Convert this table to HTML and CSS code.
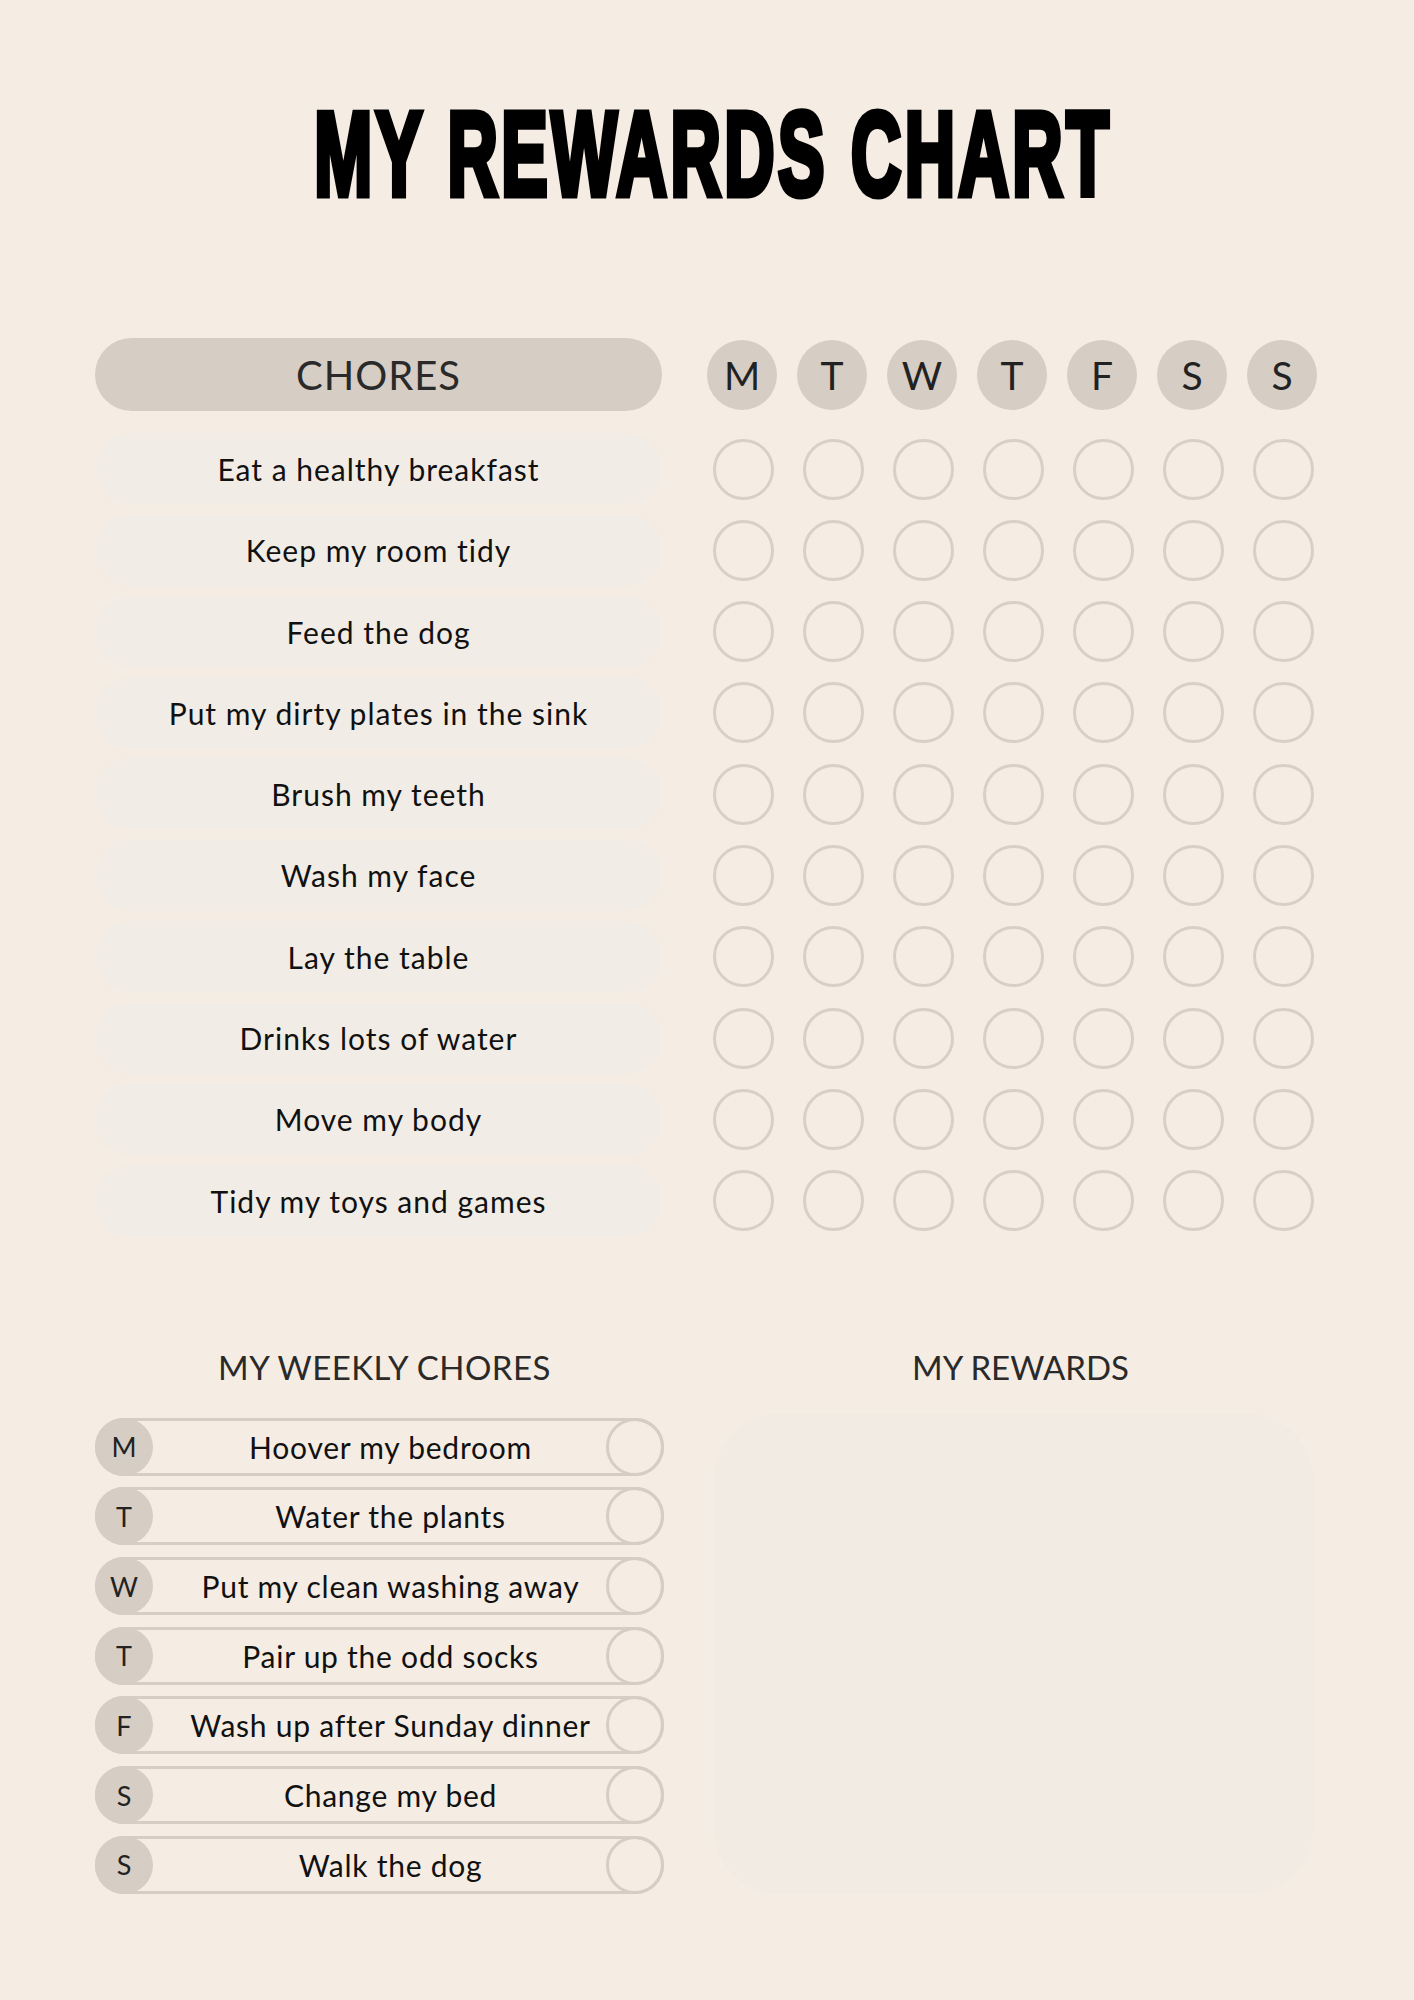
FILE: index.html
```
<!DOCTYPE html>
<html lang="en">
<head>
<meta charset="utf-8">
<title>My Rewards Chart</title>
<link rel="stylesheet" href="styles.css">
</head>
<body>
<div class="page">
  <h1 class="title"><span class="title-text">MY REWARDS CHART</span></h1>

  <section class="chart">
    <div class="chores-col">
      <div class="chores-head">CHORES</div>
      <ul class="chore-list">
        <li class="chore">Eat a healthy breakfast</li>
        <li class="chore">Keep my room tidy</li>
        <li class="chore">Feed the dog</li>
        <li class="chore">Put my dirty plates in the sink</li>
        <li class="chore">Brush my teeth</li>
        <li class="chore">Wash my face</li>
        <li class="chore">Lay the table</li>
        <li class="chore">Drinks lots of water</li>
        <li class="chore">Move my body</li>
        <li class="chore">Tidy my toys and games</li>
      </ul>
    </div>
    <div class="days-col">
      <div class="day-head">
        <span class="day">M</span><span class="day">T</span><span class="day">W</span><span class="day">T</span><span class="day">F</span><span class="day">S</span><span class="day">S</span>
      </div>
      <div class="tick-list">
        <div class="tick-row"><span class="tick"></span><span class="tick"></span><span class="tick"></span><span class="tick"></span><span class="tick"></span><span class="tick"></span><span class="tick"></span></div>
        <div class="tick-row"><span class="tick"></span><span class="tick"></span><span class="tick"></span><span class="tick"></span><span class="tick"></span><span class="tick"></span><span class="tick"></span></div>
        <div class="tick-row"><span class="tick"></span><span class="tick"></span><span class="tick"></span><span class="tick"></span><span class="tick"></span><span class="tick"></span><span class="tick"></span></div>
        <div class="tick-row"><span class="tick"></span><span class="tick"></span><span class="tick"></span><span class="tick"></span><span class="tick"></span><span class="tick"></span><span class="tick"></span></div>
        <div class="tick-row"><span class="tick"></span><span class="tick"></span><span class="tick"></span><span class="tick"></span><span class="tick"></span><span class="tick"></span><span class="tick"></span></div>
        <div class="tick-row"><span class="tick"></span><span class="tick"></span><span class="tick"></span><span class="tick"></span><span class="tick"></span><span class="tick"></span><span class="tick"></span></div>
        <div class="tick-row"><span class="tick"></span><span class="tick"></span><span class="tick"></span><span class="tick"></span><span class="tick"></span><span class="tick"></span><span class="tick"></span></div>
        <div class="tick-row"><span class="tick"></span><span class="tick"></span><span class="tick"></span><span class="tick"></span><span class="tick"></span><span class="tick"></span><span class="tick"></span></div>
        <div class="tick-row"><span class="tick"></span><span class="tick"></span><span class="tick"></span><span class="tick"></span><span class="tick"></span><span class="tick"></span><span class="tick"></span></div>
        <div class="tick-row"><span class="tick"></span><span class="tick"></span><span class="tick"></span><span class="tick"></span><span class="tick"></span><span class="tick"></span><span class="tick"></span></div>
      </div>
    </div>
  </section>

  <section class="bottom">
    <div class="weekly">
      <h2 class="section-title weekly-title">MY WEEKLY CHORES</h2>
      <ul class="weekly-list">
        <li class="weekly-row"><span class="wk-day">M</span><span class="wk-text">Hoover my bedroom</span><span class="wk-check"></span></li>
        <li class="weekly-row"><span class="wk-day">T</span><span class="wk-text">Water the plants</span><span class="wk-check"></span></li>
        <li class="weekly-row"><span class="wk-day">W</span><span class="wk-text">Put my clean washing away</span><span class="wk-check"></span></li>
        <li class="weekly-row"><span class="wk-day">T</span><span class="wk-text">Pair up the odd socks</span><span class="wk-check"></span></li>
        <li class="weekly-row"><span class="wk-day">F</span><span class="wk-text">Wash up after Sunday dinner</span><span class="wk-check"></span></li>
        <li class="weekly-row"><span class="wk-day">S</span><span class="wk-text">Change my bed</span><span class="wk-check"></span></li>
        <li class="weekly-row"><span class="wk-day">S</span><span class="wk-text">Walk the dog</span><span class="wk-check"></span></li>
      </ul>
    </div>
    <div class="rewards">
      <h2 class="section-title rewards-title">MY REWARDS</h2>
      <div class="rewards-box"></div>
    </div>
  </section>
</div>
</body>
</html>
```

FILE: styles.css
```
* { box-sizing: border-box; }

body {
  margin: 0;
  background: #f5ece3;
  font-family: "Lato", "Noto Sans", sans-serif;
  color: #111;
}

.page {
  width: 1414px;
  min-height: 2000px;
  padding-top: 95px;
}

/* Title */
.title {
  margin: 0;
  text-align: center;
  font-family: "Liberation Sans", sans-serif;
  font-weight: 700;
  font-size: 118px;
  line-height: 118px;
  color: #000;
  -webkit-text-stroke: 7px #000;
  padding-left: 12px;
}

.title-text {
  display: inline-block;
  letter-spacing: 6px;
  transform: scaleX(0.59);
  transform-origin: center;
}

/* Main chart */
.chart {
  display: grid;
  grid-template-columns: 567px 630px;
  column-gap: 35px;
  margin: 125px 0 0 95px;
}

.chores-head {
  height: 73px;
  border-radius: 37px;
  background: #d6cdc4;
  display: flex;
  align-items: center;
  justify-content: center;
  font-size: 40px;
  letter-spacing: 1px;
  color: #2a2a2a;
}

.chore-list {
  list-style: none;
  margin: 22px 0 0;
  padding: 0;
  display: flex;
  flex-direction: column;
  gap: 9.3px;
}

.chore {
  height: 72px;
  border-radius: 36px;
  background: #f1ece6;
  display: flex;
  align-items: center;
  justify-content: center;
  font-size: 30px;
  letter-spacing: 1px;
  color: #111;
}

.day-head {
  height: 73px;
  display: grid;
  grid-template-columns: repeat(7, 90px);
  align-items: center;
  justify-items: center;
}

.day {
  width: 70px;
  height: 70px;
  border-radius: 50%;
  background: #d6cdc4;
  display: flex;
  align-items: center;
  justify-content: center;
  font-size: 39px;
  color: #222;
}

.tick-list {
  margin-top: 22px;
  display: flex;
  flex-direction: column;
  gap: 9.3px;
}

.tick-row {
  height: 72px;
  display: grid;
  grid-template-columns: repeat(7, 90px);
  align-items: center;
  justify-items: center;
}

.tick {
  width: 61px;
  height: 61px;
  border: 3px solid #d8cfc6;
  border-radius: 50%;
  margin-left: 3px;
}

/* Bottom section */
.bottom {
  display: grid;
  grid-template-columns: 569px 599px;
  column-gap: 50px;
  margin: 110px 0 0 95px;
}

.section-title {
  margin: 0;
  font-size: 33px;
  font-weight: 400;
  line-height: 40px;
  text-align: center;
  color: #2a2a2a;
}

.weekly-title { padding-left: 10px; letter-spacing: 0.5px; }
.rewards-title { padding-left: 14px; }

.weekly-list {
  list-style: none;
  margin: 31px 0 0;
  padding: 0;
  display: flex;
  flex-direction: column;
  gap: 11.7px;
}

.weekly-row {
  height: 58px;
  border: 3px solid #d6cdc4;
  border-radius: 29px;
  display: flex;
  align-items: center;
}

.wk-day {
  flex: none;
  width: 58px;
  height: 58px;
  margin: -3px 0 -3px -3px;
  border-radius: 50%;
  background: #d6cdc4;
  display: flex;
  align-items: center;
  justify-content: center;
  font-size: 27px;
  color: #222;
}

.wk-text {
  flex: 1;
  text-align: center;
  font-size: 30px;
  letter-spacing: 0.75px;
  color: #111;
  padding-left: 22px;
  white-space: nowrap;
}

.wk-check {
  flex: none;
  width: 58px;
  height: 58px;
  margin: -3px -3px -3px 0;
  border: 3px solid #d6cdc4;
  border-radius: 50%;
}

.rewards-box {
  margin-top: 27px;
  height: 480px;
  border-radius: 66px;
  background: #f1ebe4;
}
```
